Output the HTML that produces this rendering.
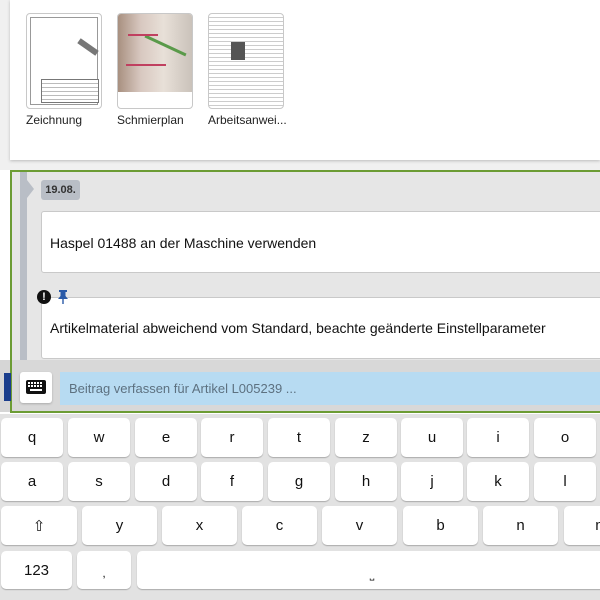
<!DOCTYPE html>
<html><head><meta charset="utf-8"><style>
*{margin:0;padding:0;box-sizing:border-box}
body{width:600px;height:600px;overflow:hidden;background:#fff;font-family:"Liberation Sans",sans-serif;position:relative}
.abs{position:absolute}
.thumb{position:absolute;top:13px;width:76px;height:96px;border:1px solid #c8c8c8;border-radius:4px;background:#fff;overflow:hidden}
.lbl{position:absolute;top:113px;font-size:12px;color:#222}
.key{position:absolute;background:#fff;border-radius:5px;box-shadow:0 1px 1px #aaa;font-size:15px;color:#111;display:flex;align-items:center;justify-content:center}
.line{position:absolute;height:1px;background:#888}
</style></head><body>
<div class="abs" style="left:0;top:0;width:600px;height:170px;background:#f0f0f0"></div>
<div class="abs" style="left:10px;top:0;width:590px;height:160px;background:#fff;box-shadow:0 1px 3px #bbb"></div>
<div class="thumb" style="left:26px">
 <div class="abs" style="left:3px;top:3px;width:68px;height:88px;border:1px solid #999"></div>
 <div class="abs" style="left:50px;top:30px;width:22px;height:6px;background:#777;transform:rotate(35deg)"></div>
 <div class="abs" style="left:14px;top:65px;width:58px;height:24px;border:1px solid #777;background:repeating-linear-gradient(#fff 0 3px,#bbb 3px 4px)"></div>
</div>
<div class="thumb" style="left:117px">
 <div class="abs" style="left:0;top:0;width:76px;height:78px;background:linear-gradient(90deg,#a89080,#d8c8c0 30%,#e8e0d8 60%,#c8c0b8);"></div>
 <div class="abs" style="left:25px;top:30px;width:45px;height:3px;background:#5a9a4a;transform:rotate(25deg)"></div>
 <div class="abs" style="left:10px;top:20px;width:30px;height:2px;background:#c04060"></div>
 <div class="abs" style="left:8px;top:50px;width:40px;height:2px;background:#c04060"></div>
</div>
<div class="thumb" style="left:208px;background:repeating-linear-gradient(#fff 0 3px,#ccc 3px 4px);">
 <div class="abs" style="left:22px;top:28px;width:14px;height:18px;background:#555"></div>
</div>
<div class="lbl" style="left:26px">Zeichnung</div>
<div class="lbl" style="left:117px">Schmierplan</div>
<div class="lbl" style="left:208px">Arbeitsanwei...</div>

<div class="abs" style="left:0;top:360px;width:600px;height:52px;background:#d6d6d6"></div>
<div class="abs" style="left:10px;top:170px;width:592px;height:243px;border:2px solid #6c9c34;border-right:none;background:#e6e6e6"></div>
<div class="abs" style="left:12px;top:360px;width:590px;height:51px;background:#d8d8d8"></div>
<div class="abs" style="left:20px;top:172px;width:7px;height:188px;background:#b9bec6"></div>
<div class="abs" style="left:27px;top:180px;width:0;height:0;border-top:9px solid transparent;border-bottom:9px solid transparent;border-left:7px solid #b9bec6"></div>
<div class="abs" style="left:41px;top:180px;width:39px;height:20px;background:#b9bec6;border-radius:3px;font-size:11px;font-weight:bold;color:#333;display:flex;align-items:center;justify-content:center">19.08.</div>
<div class="abs" style="left:41px;top:211px;width:570px;height:62px;background:#fff;border:1px solid #c9c9c9;border-radius:3px;font-size:14px;color:#111;padding:23px 0 0 8px">Haspel 01488 an der Maschine verwenden</div>
<div class="abs" style="left:41px;top:297px;width:570px;height:62px;background:#fff;border:1px solid #c9c9c9;border-radius:3px;font-size:14px;color:#111;padding:22px 0 0 8px">Artikelmaterial abweichend vom Standard, beachte geänderte Einstellparameter</div>
<div class="abs" style="left:37px;top:290px;width:14px;height:14px;border-radius:50%;background:#111;color:#fff;font-size:11px;font-weight:bold;text-align:center;line-height:14px">!</div>
<svg class="abs" style="left:56px;top:289px" width="14" height="16" viewBox="0 0 14 16"><path d="M3 1h8v2h-1.5v4l2.5 3H2l2.5-3V3H3z M6.3 10h1.4v5H6.3z" fill="#2a5aa8"/></svg>
<div class="abs" style="left:4px;top:373px;width:7px;height:28px;background:#1a3d8c"></div>
<div class="abs" style="left:20px;top:372px;width:32px;height:31px;background:#fff;border-radius:3px;box-shadow:0 1px 2px #aaa"></div>
<svg class="abs" style="left:26px;top:380px" width="20" height="14" viewBox="0 0 20 14"><rect x="0" y="0" width="20" height="14" rx="2" fill="#111"/><g fill="#fff"><rect x="2" y="2" width="2" height="2"/><rect x="5" y="2" width="2" height="2"/><rect x="8" y="2" width="2" height="2"/><rect x="11" y="2" width="2" height="2"/><rect x="14" y="2" width="2" height="2"/><rect x="2" y="5" width="2" height="2"/><rect x="5" y="5" width="2" height="2"/><rect x="8" y="5" width="2" height="2"/><rect x="11" y="5" width="2" height="2"/><rect x="14" y="5" width="2" height="2"/><rect x="4" y="9" width="12" height="2"/></g></svg>
<div class="abs" style="left:60px;top:372px;width:545px;height:33px;background:#b7dbf2;font-size:13px;color:#5d7180;padding:9px 0 0 9px">Beitrag verfassen für Artikel L005239 ...</div>

<div class="abs" style="left:0;top:414px;width:600px;height:186px;background:#e2e2e2"></div>
<div class="key" style="left:1px;top:418px;width:62px;height:39px">q</div>
<div class="key" style="left:68px;top:418px;width:62px;height:39px">w</div>
<div class="key" style="left:135px;top:418px;width:62px;height:39px">e</div>
<div class="key" style="left:201px;top:418px;width:62px;height:39px">r</div>
<div class="key" style="left:268px;top:418px;width:62px;height:39px">t</div>
<div class="key" style="left:335px;top:418px;width:62px;height:39px">z</div>
<div class="key" style="left:401px;top:418px;width:62px;height:39px">u</div>
<div class="key" style="left:467px;top:418px;width:62px;height:39px">i</div>
<div class="key" style="left:534px;top:418px;width:62px;height:39px">o</div>
<div class="key" style="left:1px;top:462px;width:62px;height:39px">a</div>
<div class="key" style="left:68px;top:462px;width:62px;height:39px">s</div>
<div class="key" style="left:135px;top:462px;width:62px;height:39px">d</div>
<div class="key" style="left:201px;top:462px;width:62px;height:39px">f</div>
<div class="key" style="left:268px;top:462px;width:62px;height:39px">g</div>
<div class="key" style="left:335px;top:462px;width:62px;height:39px">h</div>
<div class="key" style="left:401px;top:462px;width:62px;height:39px">j</div>
<div class="key" style="left:467px;top:462px;width:62px;height:39px">k</div>
<div class="key" style="left:534px;top:462px;width:62px;height:39px">l</div>
<div class="key" style="left:1px;top:506px;width:76px;height:39px">⇧</div>
<div class="key" style="left:82px;top:506px;width:75px;height:39px">y</div>
<div class="key" style="left:162px;top:506px;width:75px;height:39px">x</div>
<div class="key" style="left:242px;top:506px;width:75px;height:39px">c</div>
<div class="key" style="left:322px;top:506px;width:75px;height:39px">v</div>
<div class="key" style="left:403px;top:506px;width:75px;height:39px">b</div>
<div class="key" style="left:483px;top:506px;width:75px;height:39px">n</div>
<div class="key" style="left:564px;top:506px;width:75px;height:39px">m</div>
<div class="key" style="left:1px;top:551px;width:71px;height:38px">123</div>
<div class="key" style="left:77px;top:551px;width:54px;height:38px;font-size:12px;padding-top:6px">,</div>
<div class="key" style="left:137px;top:551px;width:470px;height:38px;font-size:12px;padding-top:8px">˽</div>
</body></html>
